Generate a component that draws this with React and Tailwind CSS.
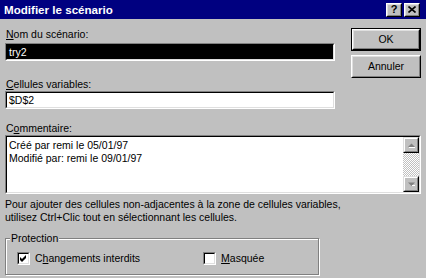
import React from 'react'

function Sunken({ className = '', inner = 'bg-white', children }) {
  return (
    <div className={`border border-t-[#808080] border-l-[#808080] border-r-white border-b-white ${className}`}>
      <div className={`h-full border border-t-black border-l-black border-r-[#dfdfdf] border-b-[#dfdfdf] ${inner}`}>
        {children}
      </div>
    </div>
  )
}

function Button({ children, isDefault }) {
  const face = (
    <div className="h-full border border-t-white border-l-white border-r-black border-b-black">
      <div className="h-full flex items-center justify-center border border-t-[#dfdfdf] border-l-[#dfdfdf] border-r-[#808080] border-b-[#808080]">
        {children}
      </div>
    </div>
  )
  return (
    <div className={`w-[70px] h-[23px] ${isDefault ? 'border border-black' : 'p-0'}`}>
      {face}
    </div>
  )
}

function CaptionButton({ children }) {
  return (
    <div className="w-[16px] h-[14px] bg-[#c0c0c0] border border-t-white border-l-white border-r-black border-b-black">
      <div className="h-full flex items-center justify-center border border-t-[#dfdfdf] border-l-[#dfdfdf] border-r-[#808080] border-b-[#808080]">
        {children}
      </div>
    </div>
  )
}

function ScrollArrow({ up }) {
  return (
    <div className="w-[16px] h-[16px] bg-[#c0c0c0] border border-t-[#dfdfdf] border-l-[#dfdfdf] border-r-black border-b-black">
      <div className="h-full flex items-center justify-center border border-t-white border-l-white border-r-[#808080] border-b-[#808080]">
        <svg width="7" height="5" viewBox="0 0 7 5">
          {up ? (
            <>
              <polygon points="3.5,0.5 7,4 0,4" fill="#808080" />
              <rect x="1" y="4" width="6" height="1" fill="#fff" />
            </>
          ) : (
            <>
              <polygon points="0,0.5 7,0.5 3.5,4" fill="#808080" />
              <rect x="4" y="3" width="3" height="1" fill="#fff" />
            </>
          )}
        </svg>
      </div>
    </div>
  )
}

function Checkbox({ checked }) {
  return (
    <Sunken className="w-[13px] h-[13px]">
      {checked && (
        <svg width="9" height="9" viewBox="0 0 9 9" className="block">
          <polygon points="1,3 3,5 7,1 7,4 3,8 1,6" fill="#000" />
        </svg>
      )}
    </Sunken>
  )
}

export default function App() {
  return (
    <div className="w-[426px] h-[278px] overflow-hidden bg-[#c0c0c0] text-black text-[10.5px] leading-[13px] font-['Liberation_Sans',Arial,sans-serif]">
      {/* Title bar */}
      <div className="h-[19px] bg-[#000080] flex items-center justify-between pl-[4px] pr-[6px]">
        <span className="text-white font-bold text-[11.6px] leading-[14px]">Modifier le scénario</span>
        <div className="flex gap-[2px]">
          <CaptionButton>
            <span className="font-bold text-[11px] leading-none">?</span>
          </CaptionButton>
          <CaptionButton>
            <svg width="8" height="7" viewBox="0 0 8 7">
              <path d="M0.5 0.5 L7.5 6.5 M7.5 0.5 L0.5 6.5" stroke="#000" strokeWidth="1.6" />
            </svg>
          </CaptionButton>
        </div>
      </div>

      <div className="px-[5px]">
        {/* Top section */}
        <div className="flex">
          <div className="w-[330px]">
            <div className="mt-[9px] pl-[1px]">
              <span className="underline">N</span>om du scénario:
            </div>
            <Sunken className="mt-[2px] h-[18px]" inner="bg-black">
              <div className="pl-[2px] text-white leading-[14px]">try2</div>
            </Sunken>
            <div className="mt-[17px] pl-[1px]">
              <span className="underline">C</span>ellules variables:
            </div>
            <Sunken className="h-[18px]">
              <div className="pl-[2px] leading-[14px]">$D$2</div>
            </Sunken>
          </div>
          <div className="ml-auto flex flex-col gap-[4px] mt-[9px]">
            <Button isDefault>OK</Button>
            <Button>Annuler</Button>
          </div>
        </div>

        {/* Commentaire */}
        <div className="mt-[13px] pl-[1px]">
          C<span className="underline">o</span>mmentaire:
        </div>
        <Sunken className="h-[59px]">
          <div className="flex h-full">
            <div className="flex-1 pl-[2px] pt-[2px]">
              <div>Créé par remi le 05/01/97</div>
              <div>Modifié par: remi le 09/01/97</div>
            </div>
            <div className="w-[16px] flex flex-col bg-[repeating-conic-gradient(#c0c0c0_0%_25%,#ffffff_0%_50%)] bg-[length:2px_2px]">
              <ScrollArrow up />
              <div className="flex-1" />
              <ScrollArrow />
            </div>
          </div>
        </Sunken>

        {/* Help */}
        <div className="mt-[4px]">
          <div>Pour ajouter des cellules non-adjacentes à la zone de cellules variables,</div>
          <div>utilisez Ctrl+Clic tout en sélectionnant les cellules.</div>
        </div>

        {/* Protection group */}
        <div className="relative mt-[14px] w-[314px] h-[37px] border border-[#808080] shadow-[inset_1px_1px_0_#fff,1px_1px_0_#fff]">
          <span className="absolute -top-[7px] left-[4px] px-[1px] bg-[#c0c0c0]">Protection</span>
          <div className="flex items-center mt-[13px] pl-[11px]">
            <Checkbox checked />
            <span className="ml-[5px]">
              C<span className="underline">h</span>angements interdits
            </span>
            <div className="ml-[63px]">
              <Checkbox />
            </div>
            <span className="ml-[5px]">
              <span className="underline">M</span>asquée
            </span>
          </div>
        </div>
      </div>
    </div>
  )
}
